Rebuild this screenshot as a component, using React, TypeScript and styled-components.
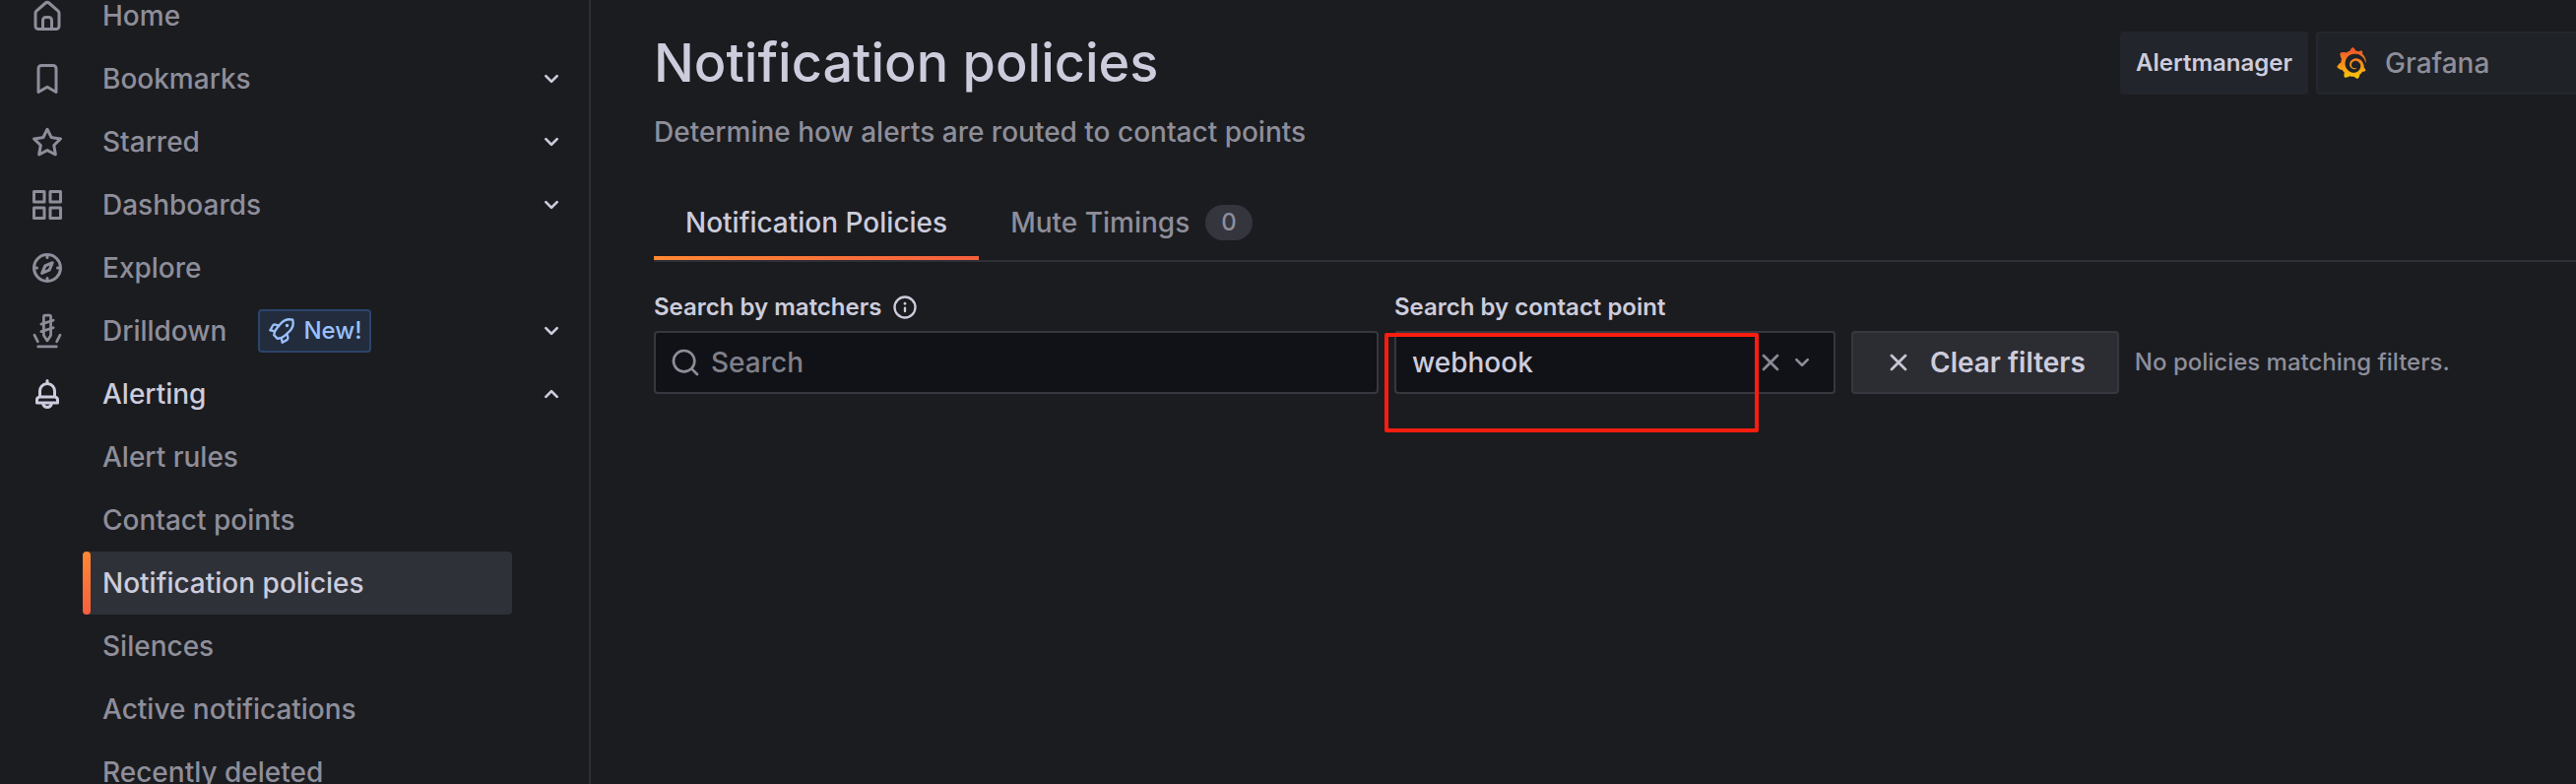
import React, { useState } from "react";
import styled, { createGlobalStyle, css } from "styled-components";
import { SiGrafana } from "react-icons/si";

const color = {
  page: "#1b1c20",
  input: "#111217",
  text: "#ccccdc",
  muted: "#8e8e9a",
  line: "#2e2f37",
  inputLine: "#37383f",
  selected: "#2f3138",
};

const GlobalStyle = createGlobalStyle`
  * { box-sizing: border-box; }
  html, body, #root { height: 100%; }
  body {
    margin: 0;
    overflow: hidden;
    background: ${color.page};
    color: ${color.text};
    font-family: Inter, "Liberation Sans", sans-serif;
    font-size: 28px;
    font-weight: 500;
    line-height: 44px;
    -webkit-font-smoothing: antialiased;
  }
  button, input { font: inherit; color: inherit; }
`;

const paths = {
  home: "M20,8h0L14,2.74a3,3,0,0,0-4,0L4,8a3,3,0,0,0-1,2.26V19a3,3,0,0,0,3,3H18a3,3,0,0,0,3-3V10.25A3,3,0,0,0,20,8ZM14,20H10V15a1,1,0,0,1,1-1h2a1,1,0,0,1,1,1Zm5-1a1,1,0,0,1-1,1H16V15a3,3,0,0,0-3-3H11a3,3,0,0,0-3,3v5H6a1,1,0,0,1-1-1V10.25a1,1,0,0,1,.34-.75l6-5.25a1,1,0,0,1,1.32,0l6,5.25a1,1,0,0,1,.34.75Z",
  bookmark: "M16,2H8A3,3,0,0,0,5,5V21a1,1,0,0,0,.5.87,1,1,0,0,0,1,0L12,18.69l5.5,3.18A1,1,0,0,0,18,22a1,1,0,0,0,.5-.13A1,1,0,0,0,19,21V5A3,3,0,0,0,16,2Zm1,17.27-4.5-2.6a1,1,0,0,0-1,0L7,19.27V5A1,1,0,0,1,8,4h8a1,1,0,0,1,1,1Z",
  star: "M22,9.67A1,1,0,0,0,21.14,9l-5.69-.83L12.9,3a1,1,0,0,0-1.8,0L8.55,8.16,2.86,9a1,1,0,0,0-.81.68,1,1,0,0,0,.25,1l4.13,4-1,5.68A1,1,0,0,0,6.9,21.44L12,18.77l5.1,2.67a.93.93,0,0,0,.46.12,1,1,0,0,0,.59-.19,1,1,0,0,0,.4-1l-1-5.68,4.13-4A1,1,0,0,0,22,9.67Zm-6.15,4a1,1,0,0,0-.29.88l.72,4.2-3.76-2a1.06,1.06,0,0,0-.94,0l-3.76,2,.72-4.2a1,1,0,0,0-.29-.88l-3-3,4.21-.61a1,1,0,0,0,.76-.55L12,5.7l1.88,3.82a1,1,0,0,0,.76.55l4.21.61Z",
  apps: "M10,13H3a1,1,0,0,0-1,1v7a1,1,0,0,0,1,1h7a1,1,0,0,0,1-1V14A1,1,0,0,0,10,13ZM9,20H4V15H9ZM21,2H14a1,1,0,0,0-1,1v7a1,1,0,0,0,1,1h7a1,1,0,0,0,1-1V3A1,1,0,0,0,21,2ZM20,9H15V4h5Zm1,4H14a1,1,0,0,0-1,1v7a1,1,0,0,0,1,1h7a1,1,0,0,0,1-1V14A1,1,0,0,0,21,13Zm-1,7H15V15h5ZM10,2H3A1,1,0,0,0,2,3v7a1,1,0,0,0,1,1h7a1,1,0,0,0,1-1V3A1,1,0,0,0,10,2ZM9,9H4V4H9Z",
  compass: "M12,2A10,10,0,1,0,22,12,10,10,0,0,0,12,2Zm1,17.93V19a1,1,0,0,0-2,0v.93A8,8,0,0,1,4.07,13H5a1,1,0,0,0,0-2H4.07A8,8,0,0,1,11,4.07V5a1,1,0,0,0,2,0V4.07A8,8,0,0,1,19.93,11H19a1,1,0,0,0,0,2h.93A8,8,0,0,1,13,19.93ZM15.14,7.55l-5,2.12a1,1,0,0,0-.52.52l-2.12,5a1,1,0,0,0,.21,1.1,1,1,0,0,0,.7.3.93.93,0,0,0,.4-.09l5-2.12a1,1,0,0,0,.52-.52l2.12-5a1,1,0,0,0-1.31-1.31Zm-2.49,5.1-2.28,1,1-2.28,2.28-1Z",
  bell: "M18,13.18V10a6,6,0,0,0-5-5.91V3a1,1,0,0,0-2,0V4.09A6,6,0,0,0,6,10v3.18A3,3,0,0,0,4,16v2a1,1,0,0,0,1,1H8.14a4,4,0,0,0,7.72,0H19a1,1,0,0,0,1-1V16A3,3,0,0,0,18,13.18ZM8,10a4,4,0,0,1,8,0v3H8Zm4,10a2,2,0,0,1-1.72-1h3.44A2,2,0,0,1,12,20Zm6-3H6V16a1,1,0,0,1,1-1H17a1,1,0,0,1,1,1Z",
  info: "M12,2A10,10,0,1,0,22,12,10,10,0,0,0,12,2Zm0,18a8,8,0,1,1,8-8A8,8,0,0,1,12,20Zm0-8.5a1,1,0,0,0-1,1v3a1,1,0,0,0,2,0v-3A1,1,0,0,0,12,11.5Zm0-4a1.25,1.25,0,1,0,1.25,1.25A1.25,1.25,0,0,0,12,7.5Z",
  rocket: "M22.601 2.062a1 1 0 0 0-.713-.713A11.252 11.252 0 0 0 10.47 4.972L9.354 6.296 6.75 5.668a2.777 2.777 0 0 0-3.387 1.357l-2.2 3.9a1 1 0 0 0 .661 1.469l3.073.659a13.42 13.42 0 0 0-.555 2.434 1 1 0 0 0 .284.836l3.1 3.1a1 1 0 0 0 .708.293c.028 0 .057-.001.086-.004a12.169 12.169 0 0 0 2.492-.49l.644 3.004a1 1 0 0 0 1.469.661l3.905-2.202a3.035 3.035 0 0 0 1.375-3.304l-.668-2.76 1.237-1.137A11.204 11.204 0 0 0 22.6 2.062ZM3.572 10.723l1.556-2.76a.826.826 0 0 1 1.07-.375l1.718.416-.65.772a13.095 13.095 0 0 0-1.59 2.398Zm12.47 8.222-2.715 1.532-.43-2.005a11.34 11.34 0 0 0 2.414-1.62l.743-.683.404 1.664a1.041 1.041 0 0 1-.416 1.112Zm1.615-6.965-3.685 3.386a9.773 9.773 0 0 1-5.17 2.304l-2.405-2.404a10.932 10.932 0 0 1 2.401-5.206l1.679-1.993a.964.964 0 0 0 .078-.092L11.99 6.27a9.278 9.278 0 0 1 8.81-3.12 9.218 9.218 0 0 1-3.143 8.829Zm-.923-6.164a1.5 1.5 0 1 0 1.5 1.5 1.5 1.5 0 0 0-1.5-1.5Z",
  search: "M21.71,20.29,18,16.61A9,9,0,1,0,16.61,18l3.68,3.68a1,1,0,0,0,1.42,0A1,1,0,0,0,21.71,20.29ZM11,18a7,7,0,1,1,7-7A7,7,0,0,1,11,18Z",
  times: "M13.41,12l6.3-6.29a1,1,0,1,0-1.42-1.42L12,10.59,5.71,4.29A1,1,0,0,0,4.29,5.71L10.59,12l-6.3,6.29a1,1,0,0,0,0,1.42,1,1,0,0,0,1.42,0L12,13.41l6.29,6.3a1,1,0,0,0,1.42,0,1,1,0,0,0,0-1.42Z",
  down: "M17,9.17a1,1,0,0,0-1.41,0L12,12.71,8.46,9.17a1,1,0,0,0-1.41,0,1,1,0,0,0,0,1.42l4.24,4.24a1,1,0,0,0,1.42,0L17,10.59A1,1,0,0,0,17,9.17Z",
  up: "M17,13.41,12.71,9.17a1,1,0,0,0-1.42,0L7.05,13.41a1,1,0,0,0,0,1.42,1,1,0,0,0,1.41,0L12,11.29l3.54,3.54a1,1,0,0,0,.7.29,1,1,0,0,0,.71-.29A1,1,0,0,0,17,13.41Z",
};

type IconName = keyof typeof paths | "drill";

const Svg = styled.svg<{ $size: number; $bold?: boolean }>`
  display: block;
  flex: none;
  width: ${(p) => p.$size}px;
  height: ${(p) => p.$size}px;
  fill: currentColor;
  ${(p) => p.$bold && "stroke: currentColor;"}
`;

function Icon({ name, size = 32, bold }: { name: IconName; size?: number; bold?: boolean }) {
  return (
    <Svg $size={size} $bold={bold} viewBox="0 0 24 24" aria-hidden="true">
      {name === "drill" ? (
        <g fill="none" stroke="currentColor" strokeWidth="1.8" strokeLinecap="round" strokeLinejoin="round">
          <path d="M9.6 15V2.4a1 1 0 0 1 1-1h2.8a1 1 0 0 1 1 1V15L12 18.6z" />
          <path d="M7.9 7.4l8.2-2.6M7.9 12.4l8.2-2.6M3.3 14.8l2.3 4.4M20.7 14.8l-2.3 4.4M5.8 22.6h12.4" />
        </g>
      ) : (
        <path d={paths[name]} />
      )}
    </Svg>
  );
}

const Shell = styled.div`
  display: flex;
  height: 100%;
`;

const Sidebar = styled.nav`
  flex: none;
  width: 600px;
  border-right: 2px solid ${color.line};
  overflow: hidden;
`;

const NavList = styled.ul`
  list-style: none;
  margin: -16px 0 0;
  padding: 0 22px 0 30px;
`;

const SubList = styled.ul`
  list-style: none;
  margin: 0;
  padding: 0 56px 0 54px;
`;

const NavRow = styled.div<{ $active?: boolean }>`
  display: flex;
  align-items: center;
  height: 64px;
  color: ${(p) => (p.$active ? color.text : color.muted)};
`;

const NavLink = styled.a`
  display: flex;
  align-items: center;
  gap: 38px;
  color: inherit;
  text-decoration: none;
`;

const SubLink = styled.a<{ $active?: boolean }>`
  display: flex;
  align-items: center;
  height: 64px;
  padding-left: 20px;
  border-radius: 4px;
  color: ${color.muted};
  text-decoration: none;
  ${(p) =>
    p.$active &&
    css`
      color: ${color.text};
      background: ${color.selected};
      padding-left: 0;
      &::before {
        content: "";
        width: 8px;
        height: 64px;
        margin-right: 12px;
        border-radius: 4px;
        background: linear-gradient(#ff8833, #f55f3e);
      }
    `}
`;

const NewBadge = styled.span`
  display: flex;
  align-items: center;
  gap: 8px;
  height: 44px;
  margin-left: 32px;
  padding: 0 8px;
  border: 2px solid #2c456b;
  border-radius: 4px;
  background: #222c3c;
  color: #9ac0fb;
  font-size: 24px;
`;

const Toggle = styled.button`
  margin-left: auto;
  padding: 0;
  border: 0;
  background: none;
  color: ${color.text};
`;

const Main = styled.main`
  flex: 1;
  min-width: 0;
  padding-left: 64px;
  overflow: hidden;
`;

const PageHeader = styled.header`
  display: flex;
  justify-content: space-between;
  align-items: flex-start;
  padding-top: 32px;
`;

const Title = styled.h1`
  margin: 0;
  font-size: 54px;
  line-height: 64px;
  font-weight: 500;
`;

const Subtitle = styled.p`
  margin: 16px 0 0;
  color: ${color.muted};
`;

const Picker = styled.div`
  display: flex;
  gap: 8px;
`;

const PickerLabel = styled.label`
  height: 64px;
  padding: 0 16px;
  border-radius: 4px;
  background: #22252b;
  font-size: 24px;
  line-height: 64px;
  font-weight: 600;
`;

const PickerButton = styled.button`
  display: flex;
  align-items: center;
  gap: 18px;
  width: 264px;
  height: 64px;
  padding: 0 18px;
  border: 2px solid #25272c;
  border-right: 0;
  border-radius: 4px 0 0 4px;
  background: #1f2226;
  color: ${color.muted};
`;

const LogoGradient = styled.svg`
  position: absolute;
  width: 0;
  height: 0;
`;

const Tabs = styled.div`
  display: flex;
  margin-top: 32px;
  border-bottom: 2px solid ${color.line};
`;

const Tab = styled.button<{ $active?: boolean }>`
  display: flex;
  align-items: center;
  gap: 16px;
  height: 76px;
  padding: 0 32px;
  border: 0;
  background: none;
  color: ${(p) => (p.$active ? color.text : color.muted)};
  ${(p) =>
    p.$active &&
    css`
      background: linear-gradient(90deg, #ff8833, #f55f3e) bottom / 100% 4px no-repeat;
    `}
`;

const Counter = styled.span`
  padding: 0 16px;
  border-radius: 20px;
  background: #34353d;
  font-size: 24px;
  line-height: 36px;
`;

const Filters = styled.form`
  display: flex;
  align-items: flex-end;
  gap: 16px;
  margin-top: 30px;
`;

const Field = styled.div<{ $width: number }>`
  flex: none;
  width: ${(p) => p.$width}px;
`;

const FieldLabel = styled.label`
  display: flex;
  align-items: center;
  gap: 10px;
  margin-bottom: 8px;
  font-size: 24px;
  line-height: 32px;
  font-weight: 600;
`;

const InputBox = styled.div<{ $inset: number; $gap: number }>`
  position: relative;
  display: flex;
  align-items: center;
  gap: ${(p) => p.$gap}px;
  height: 64px;
  padding: 0 ${(p) => p.$inset}px;
  border: 2px solid ${color.inputLine};
  border-radius: 4px;
  background: ${color.input};
  color: ${color.muted};
`;

const Input = styled.input`
  flex: 1;
  min-width: 0;
  height: 60px;
  padding: 0;
  border: 0;
  outline: 0;
  background: none;
  color: ${color.text};
  &::placeholder {
    color: #7f808a;
    opacity: 1;
  }
`;

const IconButton = styled.button`
  padding: 0;
  border: 0;
  background: none;
`;

const Highlight = styled.div`
  position: absolute;
  top: 0;
  left: -12px;
  width: 380px;
  height: 101px;
  border: 4px solid #fd1d10;
  border-radius: 2px;
  pointer-events: none;
`;

const ClearButton = styled.button`
  display: flex;
  align-items: center;
  gap: 20px;
  height: 64px;
  padding: 0 32px 0 34px;
  border: 2px solid #37383f;
  border-radius: 4px;
  background: #2c2d33;
  font-weight: 600;
`;

const Status = styled.p`
  margin: 0;
  color: ${color.muted};
  font-size: 24px;
  line-height: 64px;
`;

const mainItems: { icon: IconName; label: string; toggle?: boolean; isNew?: boolean }[] = [
  { icon: "home", label: "Home" },
  { icon: "bookmark", label: "Bookmarks", toggle: true },
  { icon: "star", label: "Starred", toggle: true },
  { icon: "apps", label: "Dashboards", toggle: true },
  { icon: "compass", label: "Explore" },
  { icon: "drill", label: "Drilldown", toggle: true, isNew: true },
];

const alertingItems = [
  "Alert rules",
  "Contact points",
  "Notification policies",
  "Silences",
  "Active notifications",
  "Recently deleted",
];

export default function App() {
  const [matchers, setMatchers] = useState("");
  const [contact, setContact] = useState("webhook");

  return (
    <>
      <GlobalStyle />
      <Shell>
        <Sidebar aria-label="Navigation">
          <NavList>
            {mainItems.map((item) => (
              <li key={item.label}>
                <NavRow>
                  <NavLink href="#">
                    <Icon name={item.icon} size={36} />
                    {item.label}
                  </NavLink>
                  {item.isNew && (
                    <NewBadge>
                      <Icon name="rocket" size={28} />
                      New!
                    </NewBadge>
                  )}
                  {item.toggle && (
                    <Toggle type="button" aria-label={`Expand ${item.label}`}>
                      <Icon name="down" />
                    </Toggle>
                  )}
                </NavRow>
              </li>
            ))}
            <li>
              <NavRow $active>
                <NavLink href="#">
                  <Icon name="bell" size={36} />
                  Alerting
                </NavLink>
                <Toggle type="button" aria-label="Collapse Alerting">
                  <Icon name="up" />
                </Toggle>
              </NavRow>
              <SubList>
                {alertingItems.map((label) => (
                  <li key={label}>
                    <SubLink href="#" $active={label === "Notification policies"}>
                      {label}
                    </SubLink>
                  </li>
                ))}
              </SubList>
            </li>
          </NavList>
        </Sidebar>

        <Main>
          <PageHeader>
            <div>
              <Title>Notification policies</Title>
              <Subtitle>Determine how alerts are routed to contact points</Subtitle>
            </div>
            <Picker>
              <PickerLabel htmlFor="alertmanager">Alertmanager</PickerLabel>
              <PickerButton id="alertmanager" type="button">
                <LogoGradient aria-hidden="true">
                  <linearGradient id="flame" x1="0" y1="0" x2="0" y2="1">
                    <stop offset="0.1" stopColor="#f05a28" />
                    <stop offset="1" stopColor="#fbca0a" />
                  </linearGradient>
                </LogoGradient>
                <SiGrafana size={32} fill="url(#flame)" />
                Grafana
              </PickerButton>
            </Picker>
          </PageHeader>

          <Tabs role="tablist">
            <Tab type="button" role="tab" aria-selected="true" $active>
              Notification Policies
            </Tab>
            <Tab type="button" role="tab" aria-selected="false">
              Mute Timings
              <Counter>0</Counter>
            </Tab>
          </Tabs>

          <Filters>
            <Field $width={736}>
              <FieldLabel htmlFor="matchers">
                Search by matchers
                <Icon name="info" size={28} />
              </FieldLabel>
              <InputBox $inset={14} $gap={10}>
                <Icon name="search" />
                <Input
                  id="matchers"
                  placeholder="Search"
                  value={matchers}
                  onChange={(e) => setMatchers(e.target.value)}
                />
              </InputBox>
            </Field>
            <Field $width={448}>
              <FieldLabel htmlFor="contact">Search by contact point</FieldLabel>
              <InputBox $inset={16} $gap={4}>
                <Input id="contact" value={contact} onChange={(e) => setContact(e.target.value)} />
                <IconButton type="button" aria-label="Clear value" onClick={() => setContact("")}>
                  <Icon name="times" size={24} bold />
                </IconButton>
                <IconButton type="button" aria-label="Open options">
                  <Icon name="down" />
                </IconButton>
                <Highlight />
              </InputBox>
            </Field>
            <ClearButton type="button" onClick={() => setContact("")}>
              <Icon name="times" size={24} bold />
              Clear filters
            </ClearButton>
            <Status>No policies matching filters.</Status>
          </Filters>
        </Main>
      </Shell>
    </>
  );
}
